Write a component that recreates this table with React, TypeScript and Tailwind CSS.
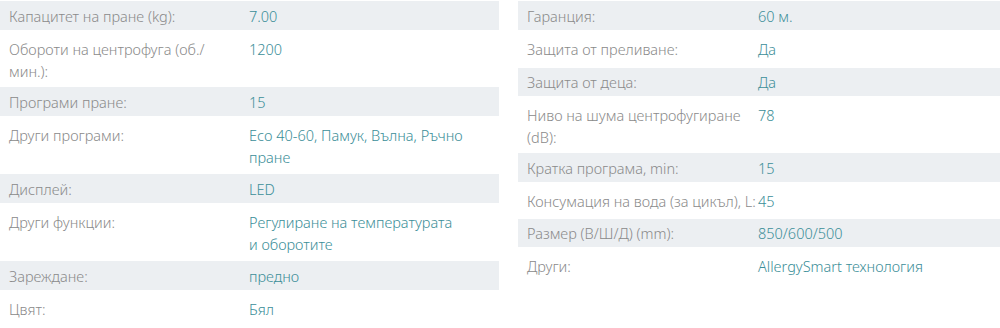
import React from "react";

type Row = { label: React.ReactNode; value: React.ReactNode; h: string; grey: boolean; top?: boolean };

const left: Row[] = [
  { label: "Капацитет на пране (kg):", value: "7.00", h: "h-[29px]", grey: true },
  { label: <>Обороти на центрофуга (об./<br />мин.):</>, value: "1200", h: "h-[57px]", grey: false, top: true },
  { label: "Програми пране:", value: "15", h: "h-[29px]", grey: true },
  { label: "Други програми:", value: <>Eco 40-60, Памук, Вълна, Ръчно<br />пране</>, h: "h-[58px]", grey: false, top: true },
  { label: "Дисплей:", value: "LED", h: "h-[29px]", grey: true },
  { label: "Други функции:", value: <>Регулиране на температурата<br />и оборотите</>, h: "h-[58px]", grey: false, top: true },
  { label: "Зареждане:", value: "предно", h: "h-[29px]", grey: true },
  { label: "Цвят:", value: "Бял", h: "h-[38px]", grey: false },
];

const right: Row[] = [
  { label: "Гаранция:", value: "60 м.", h: "h-[29px]", grey: true },
  { label: "Защита от преливане:", value: "Да", h: "h-[38px]", grey: false },
  { label: "Защита от деца:", value: "Да", h: "h-[28px]", grey: true },
  { label: <>Ниво на шума центрофугиране<br />(dB):</>, value: "78", h: "h-[57px]", grey: false, top: true },
  { label: "Кратка програма, min:", value: "15", h: "h-[29px]", grey: true },
  { label: "Консумация на вода (за цикъл), L:", value: "45", h: "h-[37px]", grey: false },
  { label: "Размер (В/Ш/Д) (mm):", value: "850/600/500", h: "h-[28px]", grey: true },
  { label: "Други:", value: "AllergySmart технология", h: "h-[38px]", grey: false },
];

function Table({ rows, labelW }: { rows: Row[]; labelW: string }) {
  return (
    <div className="flex flex-col font-['Noto_Sans',sans-serif] font-light">
      {rows.map((r, i) => (
        <div
          key={i}
          className={`flex ${r.h} ${r.grey ? "bg-[#eceff2]" : "bg-white"} ${r.top ? "items-start pt-[8px]" : "items-center"} text-[14.5px] leading-[22px]`}
        >
          <div className={`${labelW} shrink-0 pl-[9px] text-[#8a8a8a] whitespace-nowrap`}>{r.label}</div>
          <div className="pl-[9px] text-[#3b8e98] whitespace-nowrap">{r.value}</div>
        </div>
      ))}
    </div>
  );
}

export default function App() {
  return (
    <div lang="bg" className="w-[1000px] h-[328px] bg-white overflow-hidden pt-[1px] flex gap-[19px]">
      <div className="w-[499px] shrink-0">
        <Table rows={left} labelW="w-[240px]" />
      </div>
      <div className="flex-1">
        <Table rows={right} labelW="w-[231px]" />
      </div>
    </div>
  );
}
